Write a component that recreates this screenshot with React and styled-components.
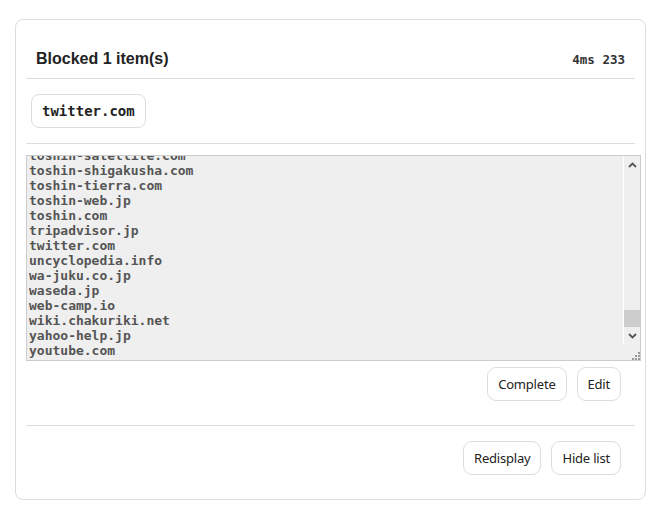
import React, { useEffect, useRef } from "react";
import styled, { createGlobalStyle } from "styled-components";

const GlobalStyle = createGlobalStyle`
  html, body {
    margin: 0;
    padding: 0;
    background: #ffffff;
  }
  body {
    font-family: "Liberation Sans", Arial, sans-serif;
    color: #222;
  }
`;

const grip =
  "data:image/svg+xml;utf8," +
  encodeURIComponent(
    '<svg xmlns="http://www.w3.org/2000/svg" width="8" height="8" viewBox="0 0 8 8" fill="#999"><rect x="6" y="0" width="2" height="2"/><rect x="3" y="3" width="2" height="2"/><rect x="6" y="3" width="2" height="2"/><rect x="0" y="6" width="2" height="2"/><rect x="3" y="6" width="2" height="2"/><rect x="6" y="6" width="2" height="2"/></svg>'
  );

const Page = styled.div`
  padding: 19px 14px 12px 15px;
`;

const Card = styled.div`
  border: 1px solid #dddddd;
  border-radius: 8px;
  padding: 0 10px 24px 10px;
  background: #ffffff;
`;

const Header = styled.div`
  display: flex;
  align-items: center;
  justify-content: space-between;
  padding: 30px 10px 10px 10px;
  border-bottom: 1px solid #dddddd;
`;

const Title = styled.h1`
  margin: 0;
  font-family: "Liberation Sans", Arial, sans-serif;
  font-size: 16px;
  line-height: 18px;
  font-weight: bold;
  color: #222;
`;

const Timing = styled.span`
  font-family: "DejaVu Sans Mono", monospace;
  font-size: 12.5px;
  font-weight: bold;
  color: #333;
`;

const ChipRow = styled.div`
  display: flex;
  flex-wrap: wrap;
  gap: 8px;
  padding: 15px 5px;
  border-bottom: 1px solid #dddddd;
`;

const Chip = styled.span`
  display: inline-flex;
  align-items: center;
  height: 32px;
  padding: 0 10px;
  border: 1px solid #dddddd;
  border-radius: 8px;
  font-family: "DejaVu Sans Mono", monospace;
  font-size: 14px;
  font-weight: bold;
  color: #222;
`;

const ListWrap = styled.div`
  position: relative;
  margin-top: 11px;
  width: calc(100% + 6px);
`;

const ListArea = styled.textarea`
  display: block;
  box-sizing: border-box;
  width: 100%;
  height: 206px;
  margin: 0;
  padding: 2px 18px 2px 2px;
  border: 1px solid #cccccc;
  background: #efefef;
  font-family: "DejaVu Sans Mono", monospace;
  font-size: 13px;
  line-height: 15px;
  font-weight: bold;
  color: #555;
  resize: vertical;
  outline: none;
  overflow: hidden;

  &::-webkit-resizer {
    background: #efefef url("${grip}") no-repeat 7px 7px;
  }
`;

/* classic scrollbar drawn over the right edge of the list */
const ScrollBar = styled.div`
  position: absolute;
  top: 1px;
  right: 1px;
  bottom: 17px;
  width: 16px;
  display: flex;
  flex-direction: column;
  border-left: 1px solid #ffffff;
  background: #efefef;
  pointer-events: none;
`;

const ScrollArrow = styled.div`
  height: 17px;
  flex: none;
  display: flex;
  align-items: center;
  justify-content: center;
`;

const ScrollTrack = styled.div`
  flex: 1;
  display: flex;
  flex-direction: column;
  justify-content: flex-end;
`;

const ScrollThumb = styled.div`
  height: 17px;
  background: #cdcdcd;
`;

const Chevron = ({ up }) => (
  <svg width="9" height="6" viewBox="0 0 9 6">
    <path
      d={up ? "M1 5 L4.5 1.5 L8 5" : "M1 1 L4.5 4.5 L8 1"}
      fill="none"
      stroke="#555"
      strokeWidth="1.8"
    />
  </svg>
);

const ButtonRow = styled.div`
  display: flex;
  justify-content: flex-end;
  gap: 10px;
  padding: ${(p) => p.$pad};
  border-bottom: ${(p) => (p.$divider ? "1px solid #dddddd" : "none")};
`;

const Button = styled.button`
  height: 34px;
  padding: 0 10px;
  border: 1px solid #dddddd;
  border-radius: 9px;
  background: #ffffff;
  font-family: "Noto Sans", "Open Sans", sans-serif;
  font-size: 13px;
  letter-spacing: -0.2px;
  color: #222;
  cursor: pointer;
`;

const domains = [
  "4gamer.net", "5ch.net", "abema.tv", "adobe.com", "ameba.jp", "ameblo.jp",
  "amazon.co.jp", "animate.co.jp", "atwiki.jp", "b.hatena.ne.jp", "benesse.jp",
  "bilibili.com", "blog.goo.ne.jp", "booklive.jp", "chiebukuro.yahoo.co.jp",
  "cmoa.jp", "dailymotion.com", "discord.com", "dmm.co.jp", "dmm.com",
  "ebookjapan.yahoo.co.jp", "eikaiwa.dmm.com", "facebook.com", "famitsu.com",
  "fc2.com", "gamewith.jp", "gigazine.net", "github.com", "gnavi.co.jp",
  "goo.ne.jp", "google.co.jp", "hatenablog.com", "hulu.jp", "instagram.com",
  "itmedia.co.jp", "jin115.com", "juku-navi.jp", "jukunavi.jp", "kakaku.com",
  "kawai-juku.ac.jp", "kyoiku.jp", "line.me", "livedoor.com", "mainichi.jp",
  "mercari.com", "mixi.jp", "mynavi.jp", "netflix.com", "news.yahoo.co.jp",
  "nhk.or.jp", "nicovideo.jp", "note.com", "oricon.co.jp", "pixiv.net",
  "prime.amazon.co.jp", "qiita.com", "rakuten.co.jp", "reddit.com",
  "sankei.com", "shonenjump.com", "showroom-live.com", "smartnews.com",
  "snow.me", "spotify.com", "studyplus.jp", "sundai.ac.jp", "syosetu.com",
  "tabelog.com", "tiktok.com", "togetter.com", "tokyo-np.co.jp",
  "toshin-bunko.com", "toshin-dai.com", "toshin-eisei.com", "toshin-kyoto.com",
  "toshin-satellite.com", "toshin-shigakusha.com", "toshin-tierra.com",
  "toshin-web.jp", "toshin.com", "tripadvisor.jp", "twitter.com",
  "uncyclopedia.info", "wa-juku.co.jp", "waseda.jp", "web-camp.io",
  "wiki.chakuriki.net", "yahoo-help.jp", "youtube.com",
];

export default function App() {
  const listRef = useRef(null);

  useEffect(() => {
    if (listRef.current) {
      listRef.current.scrollTop = listRef.current.scrollHeight;
    }
  }, []);

  return (
    <Page>
      <GlobalStyle />
      <Card>
        <Header>
          <Title>Blocked 1 item(s)</Title>
          <Timing>4ms 233</Timing>
        </Header>
        <ChipRow>
          <Chip>twitter.com</Chip>
        </ChipRow>
        <ListWrap>
          <ListArea ref={listRef} readOnly value={domains.join("\n")} />
          <ScrollBar>
            <ScrollArrow>
              <Chevron up />
            </ScrollArrow>
            <ScrollTrack>
              <ScrollThumb />
            </ScrollTrack>
            <ScrollArrow>
              <Chevron />
            </ScrollArrow>
          </ScrollBar>
        </ListWrap>
        <ButtonRow $pad="6px 14px 24px 0" $divider>
          <Button>Complete</Button>
          <Button>Edit</Button>
        </ButtonRow>
        <ButtonRow $pad="15px 14px 0 0">
          <Button>Redisplay</Button>
          <Button>Hide list</Button>
        </ButtonRow>
      </Card>
    </Page>
  );
}
